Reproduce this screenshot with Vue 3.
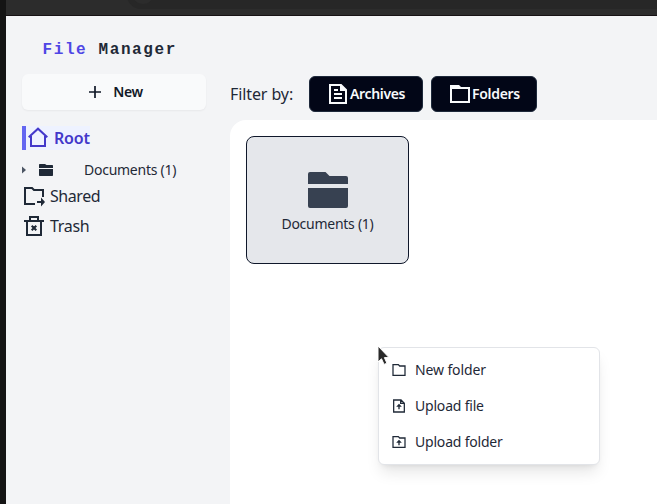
<script setup>
const menuItems = [
  { id: 'new', label: 'New folder', width: 'm-new' },
  { id: 'file', label: 'Upload file', width: 'm-file' },
  { id: 'folder', label: 'Upload folder', width: 'm-folder' },
]
</script>

<template>
  <div class="desktop">
    <div class="browser-bar"><div class="address"><span class="address-icon"></span></div></div>
    <div class="app">
      <aside class="sidebar">
        <h1 class="brand"><span>File</span> Manager</h1>
        <button class="new-btn">
          <svg width="16" height="16" viewBox="0 0 16 16"><path d="M8 2v12M2 8h12" fill="none" stroke="currentColor" stroke-width="1.7" /></svg>
          <span>New</span>
        </button>
        <nav>
          <a class="root">
            <svg width="24" height="24" viewBox="0 0 24 24"><path d="M2.7 11.2 12 2.7l9.3 8.500M5 10v10h14V10" fill="none" stroke="currentColor" stroke-width="2" /></svg>
            <span>Root</span>
          </a>
          <a class="tree">
            <svg class="caret" width="4" height="8" viewBox="0 0 4 8"><path d="M0 .5v7L4 4z" fill="#4b5563" /></svg>
            <svg class="tree-folder" width="14" height="12" viewBox="0 0 14 12"><path d="M0 4V.7Q0 0 .7 0H6l1.500 1h5.800q.7 0 .7.700V4zM0 5h14v6.300q0 .7-.7.700H.7Q0 12 0 11.300z" fill="currentColor" /></svg>
            <span>Documents (1)</span>
          </a>
          <a class="link">
            <svg width="24" height="24" viewBox="0 0 24 24"><path d="M13 20H3V4h7l2 2h9v7" fill="none" stroke="currentColor" stroke-width="2" /><path d="M15 17h4v-3.500l4 4.500-4 4.500V19h-4z" fill="currentColor" /></svg>
            <span class="shared">Shared</span>
          </a>
          <a class="link">
            <svg width="24" height="24" viewBox="0 0 24 24"><path d="M2 7h20M5 7v14h14V7M8 7V3h8v4M9.700 11.700l4.600 4.600m0-4.600-4.600 4.600" fill="none" stroke="currentColor" stroke-width="2" /></svg>
            <span class="trash">Trash</span>
          </a>
        </nav>
      </aside>

      <main>
        <div class="filters">
          <span class="filter-label">Filter by:</span>
          <button class="filter archives">
            <svg width="24" height="24" viewBox="0 0 24 24"><path d="M4 3h11l5 5v13H4z" fill="none" stroke="currentColor" stroke-width="2" /><path d="M14 3h1l5 5v1h-6zM8 7h4v2H8zM8 11h8v2H8zM8 15h8v2H8z" fill="currentColor" /></svg>
            <span>Archives</span>
          </button>
          <button class="filter folders">
            <svg width="24" height="24" viewBox="0 0 24 24"><path d="M2 21V3h9l2 2h9v16zM4 7v12h16V7z" fill="currentColor" fill-rule="evenodd" /></svg>
            <span>Folders</span>
          </button>
        </div>
        <section class="content">
          <div class="card">
            <svg width="40" height="36" viewBox="0 0 40 36"><path d="M0 12V2q0-2 2-2h15.500l4 4H38q2 0 2 2v6zM0 16h40v18q0 2-2 2H2q-2 0-2-2z" fill="#374151" /></svg>
            <span>Documents (1)</span>
          </div>
        </section>
      </main>
    </div>

    <div class="menu">
      <div v-for="item in menuItems" :key="item.id" class="menu-item">
        <svg width="16" height="16" viewBox="0 0 24 24">
          <path v-if="item.id === 'file'" d="M4 3h11l5 5v13H4zM14.500 3v5H20" fill="none" stroke="currentColor" stroke-width="1.900" />
          <path v-else d="M3 20V4h8l2 2h8v14z" fill="none" stroke="currentColor" stroke-width="1.900" />
          <path v-if="item.id !== 'new'" d="M12 8.500 16.200 13H13v4h-2v-4H7.800z" fill="currentColor" />
        </svg>
        <span :class="item.width">{{ item.label }}</span>
      </div>
    </div>
    <svg class="cursor" width="13" height="21" viewBox="0 0 13 21"><path d="M1 1v16l3.500-3.200 2.600 5.600 2.800-1.200-2.500-5.600H12z" fill="#292929" stroke="#fff" stroke-width="1" /></svg>
  </div>
</template>

<style>
body { margin: 0; }
</style>

<style scoped>
* { box-sizing: border-box; }
.desktop {
  position: relative;
  width: 657px;
  height: 504px;
  overflow: hidden;
  padding-left: 6px;
  background: #141414;
  color: #1f2937;
  font-family: "Noto Sans", sans-serif;
}
svg { display: block; flex: none; }
span { white-space: nowrap; }
button { border: 0; margin: 0; font: inherit; }
.browser-bar {
  height: 16px;
  background: #2c2c2c;
  border-bottom: 1px solid #171214;
  overflow: hidden;
}
.address {
  width: 560px;
  height: 28px;
  margin: -19px 0 0 121px;
  padding: 1px 5px;
  border-radius: 14px;
  background: #272727;
}
.address-icon { display: block; width: 22px; height: 22px; border-radius: 50%; background: #2c2c2c; }
.app { display: flex; height: 488px; background: #f3f4f6; }
.sidebar { width: 224px; flex: none; padding: 20px 24px 0 16px; }
.brand {
  margin: 0 0 14px 20.5px;
  font: 700 16px/24px "Liberation Mono", monospace;
  letter-spacing: 1.6px;
  padding-top: 2px;
  height: 24px;
  white-space: pre;
}
.brand span { color: #4f46e5; }
.new-btn {
  display: flex;
  align-items: center;
  justify-content: center;
  gap: 10px;
  width: 184px;
  height: 36px;
  padding: 0 0 0 2px;
  border-radius: 6px;
  background: #f9fafb;
  box-shadow: 0 1px 2px #0000000d;
  color: #111827;
  font-size: 14px;
  font-weight: 600;
}
.new-btn span { letter-spacing: -0.35px; padding-bottom: 2px; }
nav { display: flex; flex-direction: column; align-items: flex-start; padding-top: 16px; }
nav a { display: flex; align-items: center; }
.root {
  height: 24px;
  width: 68px;
  border-left: 4px solid #6366f1;
  background: #eef2ff;
  color: #4338ca;
  font-weight: 600;
  font-size: 16px;
}
.root span { margin-left: 4px; letter-spacing: -0.2px; }
.tree { height: 20px; margin-top: 10px; font-size: 14px; }
.tree-folder { margin-left: 13px; }
.tree span { margin-left: 31px; letter-spacing: -0.26px; padding-bottom: 2px; }
.link { height: 24px; margin-top: 4px; font-size: 16px; }
.link + .link { margin-top: 6px; }
.link span { margin-left: 4px; }
.shared { letter-spacing: -0.45px; }
.trash { letter-spacing: -0.3px; }
main { flex: 1; min-width: 0; display: flex; flex-direction: column; padding-top: 60px; }
.filters { display: flex; align-items: center; height: 36px; }
.filter-label { width: 79px; font-size: 16px; letter-spacing: -0.1px; }
.filter {
  display: flex;
  align-items: center;
  height: 36px;
  padding: 0 0 0 16px;
  border: 1px solid #1e293b;
  border-radius: 6px;
  background: #020617;
  color: #f8fafc;
  font-size: 14px;
  font-weight: 600;
}
.filter span { padding-bottom: 2px; }
.archives { width: 114px; margin-right: 8px; }
.archives span { letter-spacing: -0.35px; }
.folders { width: 106px; }
.folders span { letter-spacing: -0.3px; }
.content { flex: 1; margin-top: 8px; padding: 16px; background: #fff; border-top-left-radius: 16px; }
.card {
  display: flex;
  flex-direction: column;
  align-items: center;
  width: 163px;
  height: 128px;
  padding-top: 35px;
  border: 1px solid #0f172a;
  border-radius: 8px;
  background: #e5e7eb;
  font-size: 14px;
  line-height: 20px;
}
.card span { margin-top: 6px; letter-spacing: -0.26px; }
.menu {
  position: absolute;
  left: 378px;
  top: 347px;
  width: 222px;
  height: 118px;
  padding: 4px;
  border: 1px solid #e2e4e8;
  border-radius: 6px;
  background: #fff;
  box-shadow: 0 10px 15px -3px #0000001a, 0 4px 6px -4px #0000001a;
}
.menu-item { display: flex; align-items: center; gap: 8px; height: 36px; padding-left: 8px; font-size: 14px; }
.menu-item span { padding-bottom: 2px; }
.m-new { letter-spacing: -0.12px; }
.m-file { letter-spacing: -0.2px; }
.m-folder { letter-spacing: -0.2px; }
.cursor { position: absolute; left: 377px; top: 345px; }
</style>
